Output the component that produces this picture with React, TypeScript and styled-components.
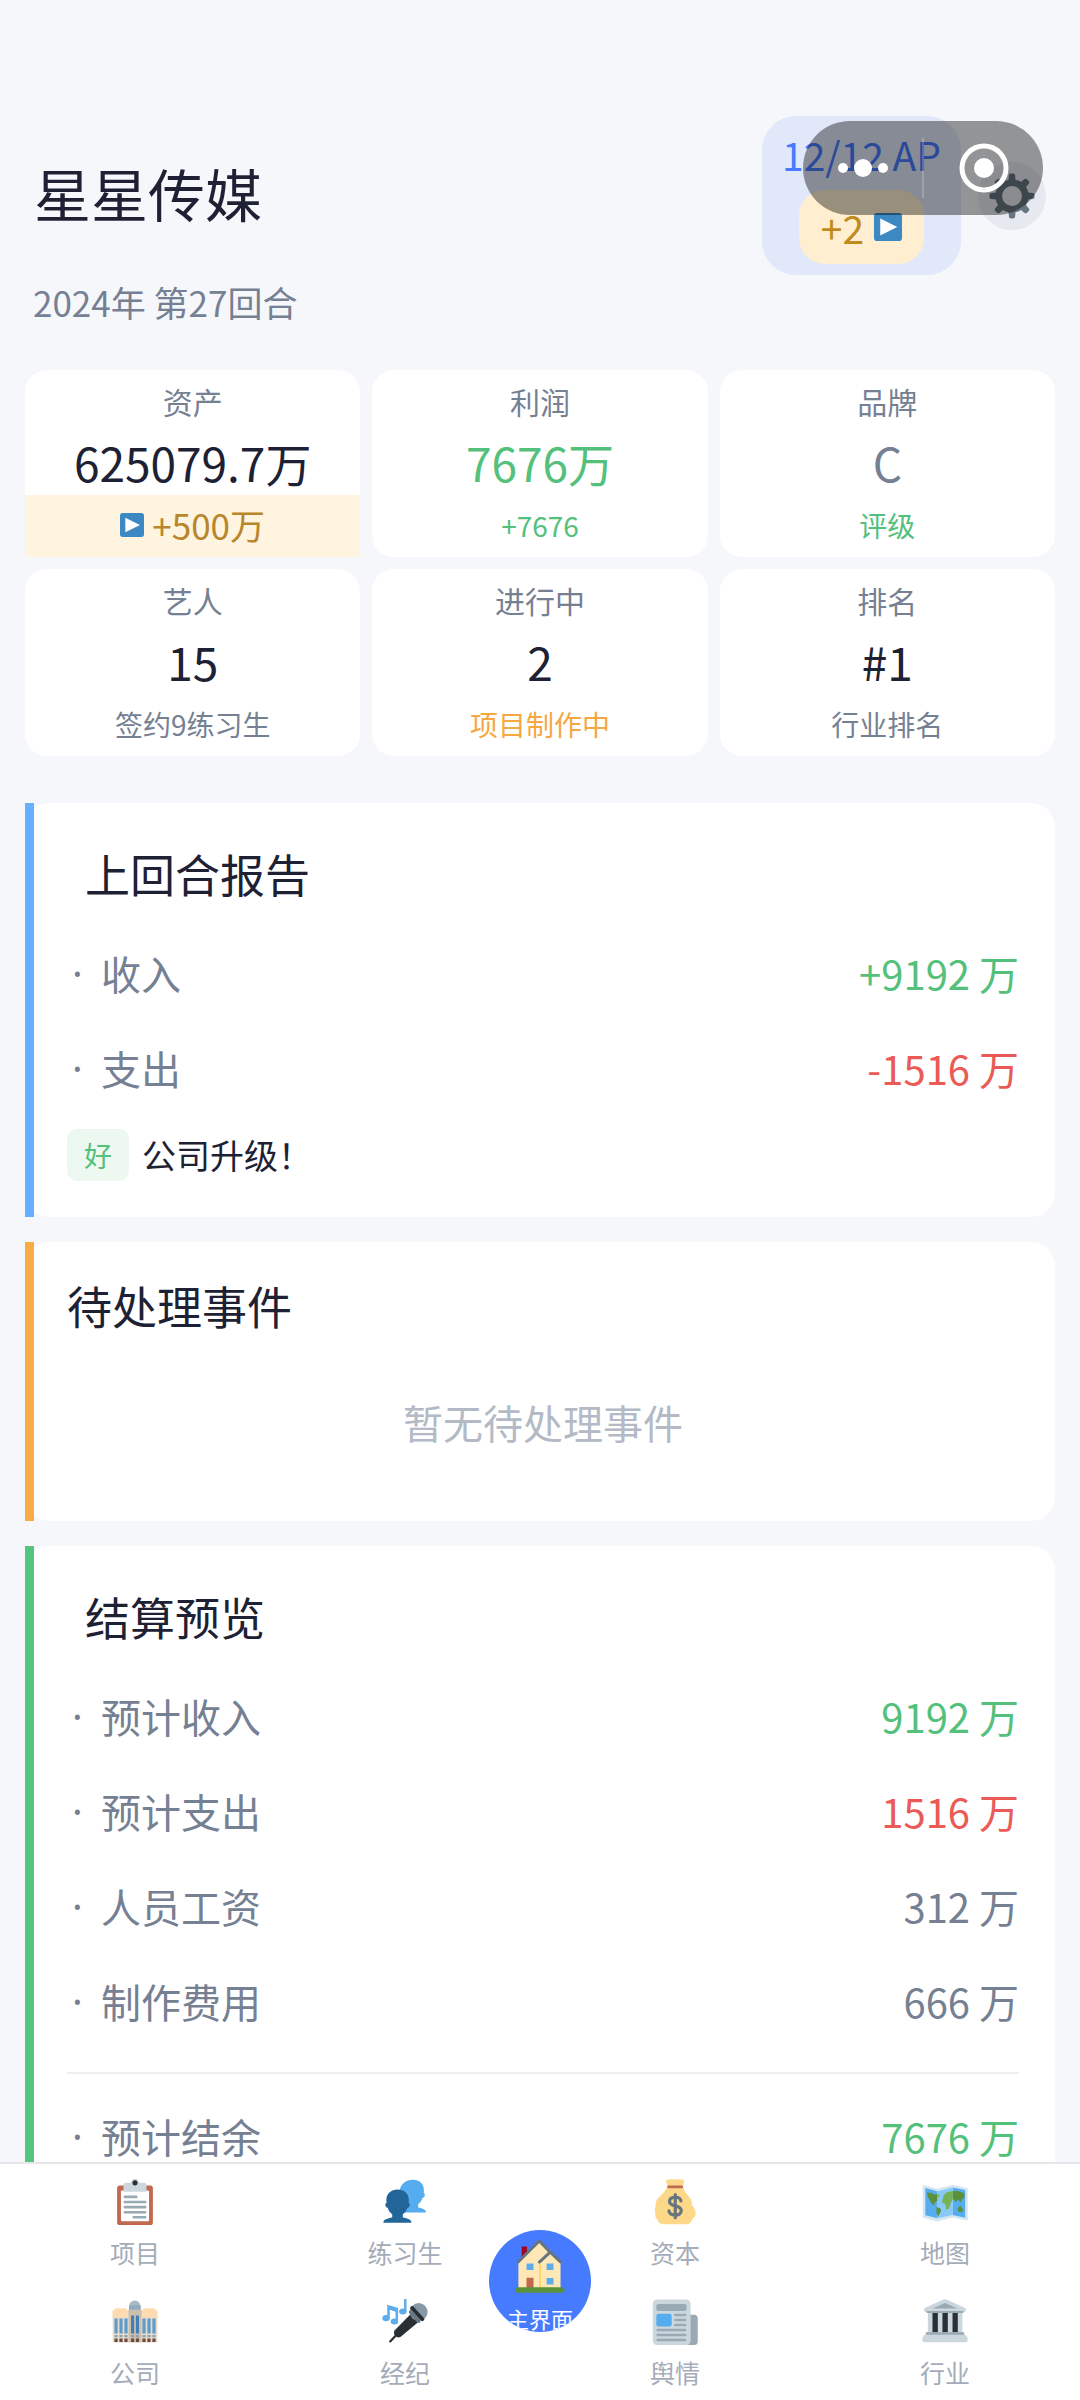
import React from "react";
import styled, { createGlobalStyle } from "styled-components";

const color = {
  page: "#f5f7fb",
  card: "#ffffff",
  ink: "#1d2133",
  muted: "#768093",
  faint: "#a4acba",
  green: "#53c07b",
  red: "#ea5a57",
  orange: "#f5a742",
  blue: "#477bff",
  gold: "#b8862b",
};

const GlobalStyle = createGlobalStyle`
  *, *::before, *::after { box-sizing: border-box; }
  body {
    margin: 0;
    background: ${color.page};
    color: ${color.ink};
    font-family: "Noto Sans CJK SC", "Noto Sans", sans-serif;
  }
  h1, h2, p, dl, dd, dt { margin: 0; font-weight: 400; }
  button { border: 0; padding: 0; font: inherit; cursor: pointer; }
`;

const Shell = styled.div`
  height: 100vh;
  display: flex;
  flex-direction: column;
  position: relative;
`;

const Scroll = styled.main`
  flex: 1;
  min-height: 0;
  overflow-y: auto;
  scrollbar-width: none;
  padding: 116px 25px 40px;
`;

const Header = styled.header`
  display: flex;
  align-items: center;
  gap: 17px;
  padding: 0 9px;
`;

const Company = styled.h1`
  flex: 1;
  padding-bottom: 8px;
  font-size: 57px;
  line-height: 80px;
`;

const ActionPoints = styled.div`
  display: flex;
  flex-direction: column;
  align-items: center;
  gap: 11px;
  padding: 13px 20px 11px;
  border-radius: 34px;
  background: #e1e8fa;
  color: ${color.blue};
  font-size: 39px;
  line-height: 50px;
`;

const Bonus = styled.button`
  display: flex;
  align-items: center;
  gap: 10px;
  height: 74px;
  padding: 0 22px;
  border-radius: 26px;
  background: #ffefd0;
  color: #c18a1f;
`;

const GearButton = styled.button`
  display: grid;
  place-items: center;
  width: 68px;
  height: 68px;
  border-radius: 50%;
  background: #e6e9f0;
`;

const Turn = styled.p`
  margin: 3px 0 44px;
  padding: 0 8px;
  color: ${color.muted};
  font-size: 35px;
  line-height: 48px;
`;

const Capsule = styled.div`
  position: absolute;
  top: 121px;
  right: 37px;
  display: flex;
  align-items: center;
  width: 240px;
  height: 94px;
  border-radius: 47px;
  background: rgba(0, 0, 0, 0.4);
`;

const CapsuleButton = styled.button`
  flex: 1;
  display: grid;
  place-items: center;
  height: 100%;
  background: none;
`;

const CapsuleRule = styled.span`
  width: 2px;
  height: 60px;
  background: rgba(255, 255, 255, 0.2);
`;

const Stats = styled.section`
  display: grid;
  grid-template-columns: repeat(3, 1fr);
  gap: 12px;
  margin-bottom: 47px;
`;

const Stat = styled.div`
  padding-top: 10px;
  border-radius: 22px;
  background: ${color.card};
  text-align: center;
`;

const StatLabel = styled.p`
  margin-bottom: 11px;
  color: ${color.muted};
  font-size: 30px;
  line-height: 42px;
`;

const StatValue = styled.p<{ $tone?: string }>`
  padding-bottom: 4px;
  color: ${(p) => p.$tone || color.ink};
  font-size: 46px;
  line-height: 58px;
`;

const StatNote = styled.p<{ $tone?: string }>`
  padding-bottom: 2px;
  color: ${(p) => p.$tone || color.muted};
  font-size: 28px;
  line-height: 60px;
`;

const AdBonus = styled.button`
  display: flex;
  align-items: center;
  justify-content: center;
  gap: 8px;
  width: 100%;
  height: 62px;
  padding-bottom: 3px;
  background: #fff4df;
  color: ${color.gold};
  font-size: 35px;
`;

const Card = styled.section<{ $accent: string }>`
  position: relative;
  margin-bottom: 25px;
  padding: 34px 36px 36px 42px;
  border-radius: 24px;
  background: ${color.card};

  &::before {
    content: "";
    position: absolute;
    inset: 0 auto 0 0;
    width: 9px;
    background: ${(p) => p.$accent};
  }
`;

const CardTitle = styled.h2<{ $indented?: boolean }>`
  margin-bottom: ${(p) => (p.$indented ? 14 : 0)}px;
  padding-left: ${(p) => (p.$indented ? 18 : 0)}px;
  font-size: 45px;
  line-height: ${(p) => (p.$indented ? 74 : 60)}px;
`;

const Row = styled.div`
  display: flex;
  align-items: center;
  height: 95px;
  color: ${color.muted};
  font-size: 40px;
  line-height: 44px;
`;

const Bullet = styled.span`
  width: 34px;
  padding-left: 5px;
  font-family: "Noto Sans", sans-serif;
`;

const RowLabel = styled.dt`
  flex: 1;
`;

const RowValue = styled.dd<{ $tone?: string }>`
  color: ${(p) => p.$tone || color.muted};
`;

const Rule = styled.hr`
  margin: 24px 0 14px;
  border: 0;
  border-top: 2px solid #edeff3;
`;

const News = styled.p`
  display: flex;
  align-items: center;
  gap: 13px;
  margin-top: 14px;
  font-size: 34px;
  line-height: 52px;
`;

const Tag = styled.span`
  padding: 0 17px;
  border-radius: 10px;
  background: #edf8f1;
  color: ${color.green};
  font-size: 28px;
`;

const Empty = styled.p`
  padding: 58px 0 35px;
  color: #b3bac6;
  font-size: 40px;
  line-height: 56px;
  text-align: center;
`;

const Nav = styled.nav`
  position: relative;
  display: grid;
  grid-template-columns: repeat(4, 1fr);
  row-gap: 30px;
  padding: 15px 0 11px;
  border-top: 2px solid #e4e6ea;
  background: ${color.card};
`;

const NavItem = styled.button`
  display: flex;
  flex-direction: column;
  align-items: center;
  gap: 10px;
  background: none;
  color: ${color.faint};
  font-size: 25px;
  line-height: 34px;
`;

const HomeButton = styled.button`
  position: absolute;
  top: 66px;
  left: 50%;
  display: flex;
  flex-direction: column;
  align-items: center;
  gap: 13px;
  width: 102px;
  height: 102px;
  padding-top: 9px;
  margin-left: -51px;
  overflow: hidden;
  border-radius: 50%;
  background: ${color.blue};
  color: #ffffff;
  font-size: 22px;
  line-height: 24px;

  svg { flex: none; }
`;

type IconProps = { size?: number; children?: React.ReactNode };

const Icon = ({ size = 46, children }: IconProps) => (
  <svg width={size} height={size} viewBox="0 0 36 36" aria-hidden="true">
    {children}
  </svg>
);

const PlayIcon = ({ size }: IconProps) => (
  <Icon size={size}>
    <rect width="36" height="36" rx="4" fill="#3b88c3" />
    <path d="M8 7l22 11L8 29z" fill="#fff" />
  </Icon>
);

const GearIcon = () => (
  <Icon>
    <g fill="#66757f">
      {[0, 45, 90, 135, 180, 225, 270, 315].map((a) => (
        <path key={a} transform={`rotate(${a} 18 18)`} d="M15 8l.6-6.3Q15.8.4 17 .4h2q1.200 0 1.400 1.300L21 8z" />
      ))}
    </g>
    <circle cx="18" cy="18" r="10.400" fill="none" stroke="#66757f" strokeWidth="5.200" />
  </Icon>
);

const ClipboardIcon = () => (
  <Icon>
    <rect x="4" y="5" width="28" height="31" rx="2" fill="#c1694f" />
    <rect x="7" y="9" width="22" height="24" rx="1" fill="#fff" />
    <path fill="#ccd6dd" d="M25 3h-4a3 3 0 1 0-6 0h-4a2 2 0 0 0-2 2v5h18V5a2 2 0 0 0-2-2z" />
    <circle cx="18" cy="3" r="2" fill="#292f33" />
    <path stroke="#99aab5" strokeWidth="2" strokeLinecap="round" d="M10 14h9M10 18h16M10 22h16M10 26h16M17 30h9" />
  </Icon>
);

const PeopleIcon = () => (
  <Icon>
    <path
      fill="#55acee"
      d="M24.300.6c5.200 0 8.500 3.600 8.500 8.200 0 .8 0 1.400-.2 2 .8.3 1 1.200.8 2.200-.2 1.100-.9 1.900-1.600 1.700-.7 2.300-2 4-3.500 5.100v2.500c3.500.7 6.300 1.700 6.300 4H14V8.800C14.600 4 18.600.6 24.300.6z"
    />
    <path
      fill="#269"
      d="M12.300 8.300c5.400 0 8.700 3.500 8.700 8.200 0 .8 0 1.500-.2 2.100.8.3 1.100 1.200.9 2.200-.2 1.100-1 1.800-1.700 1.600-.7 2.300-2 4.100-3.700 5.200v2.600c3.800.7 6.700 1.400 6.700 4H1.100c0-2.600 3-3.300 6.900-4v-2.600c-1.700-1.100-3-2.900-3.600-5.200-.8.2-1.500-.5-1.700-1.600-.2-1 .1-1.900.9-2.200-.1-.6-.2-1.300-.2-2.100 0-4.700 3.500-8.200 8.900-8.200z"
    />
  </Icon>
);

const MoneyIcon = () => (
  <Icon>
    <path
      fill="#fdd888"
      d="M11 2.200c-.3-1.500 1-2.200 2.200-1.500 1-.9 2.300-.9 3.200-.2 1.100-.6 2.400-.6 3.300 0 1-.7 2.100-.6 3 .2 1.400-.7 2.700 0 2.400 1.500-.2 1.200-.7 2-.9 3.300.8 5 4.500 7.300 6.300 10.600 1 1.900.8 3 .6 4 1.400 1.700 3 4 3.100 7-.1 2.200-1.600 3.300-2.400 4-.7 2.700-2.300 4.400-5 4.400H9.500c-2.700 0-5-1.700-5.300-4-1.200-1-1.900-2.300-1.600-4.600C1.700 25.500 2.300 22 3 20.500c-.4-1.600.1-3 1-4.500 2-3 6.700-5.500 8-10.500-.1-1.400-.8-2.100-1-3.300z"
    />
    <rect x="12" y="5" width="12.300" height="2.200" rx="1" fill="#bf6952" />
    <path
      fill="none"
      stroke="#67757f"
      strokeWidth="2.500"
      strokeLinecap="round"
      d="M18.200 12.300v18M22.600 17.200c-.2-1.900-2-2.900-4.400-2.900-2.500 0-4.500 1.100-4.500 3.300 0 4.700 9.200 2.200 9.200 7.100 0 2.300-2 3.600-4.700 3.600-2.900 0-4.700-1.300-4.900-3.300"
    />
  </Icon>
);

const MapIcon = () => (
  <Icon>
    <path fill="#d5e6f2" d="M1.700 4.800L12 7.600l12-3 10.800 2.200q1 .2 1 1.200v23.600q0 1-1 .8L24 30.200l-12 3L1.500 30.400q-1-.2-1-1.200V5.600q0-1 1.200-.8z" />
    <path fill="#55acee" d="M2.600 7l9.400 2.500v21.300l-9.400-2.500zM24 6.700l9.800 2v21.600l-9.800-2.200z" />
    <path fill="#88c9f9" d="M12 9.500l12-2.800v21.400l-12 2.700z" />
    <path fill="#5c913b" d="M3.800 10.600l4 .4 1.800 1.200L12 12v5l-2 1.600-.6 2.400L7 18.500 4.700 14zM11.200 22l3 .8.800 2.200-1.600 2.800-.6 2-1.300-2.800z" />
    <path fill="#5c913b" d="M24 9.600l3.400-.4 3.200 1 2.700 1.200-.3 3.400-2 1.500-.3 2.500-2.200-2.600L26.300 18 24 15zM28 22.500l2-1.500 2 2.600-.3 2.500-3.500-.7z" />
    <path fill="#77b255" d="M12.300 12l1.700.8-1.700 2.500zM17 12.500l2.500-2.200 4.500-1v6.800l-1.500 2.500-1.300 4.400-2.300 1-.6-4.500-2.600-1 .5-3z" />
  </Icon>
);

const TowerIcon = () => (
  <Icon>
    <circle cx="17.800" cy="5.400" r="4.300" fill="#aab8c2" />
    <rect x="13.300" y="5" width="9.200" height="5" fill="#8fa9bd" />
    <path fill="#e9dccb" d="M.5 9.300h12.300V34H.5zM23.200 9.300h12.300V34H23.200z" />
    <path fill="#ffdcb0" d="M.5 9.300L3 7.300h8l1.800 2v5H.5zM35.500 9.300L33 7.300h-8l-1.800 2v5h12.300z" />
    <rect x="12.800" y="8.300" width="10.400" height="25.700" fill="#cdbfae" />
    <path fill="#5d9ccb" d="M1.900 15.200h2.500V27H1.900zM5.800 15.200h2.500V27H5.800zM9.700 15.200h2.500V27H9.700zM23.800 15.200h2.500V27h-2.500zM27.700 15.200h2.500V27h-2.500zM31.600 15.200h2.500V27h-2.500z" />
    <path fill="#3f7fb5" d="M14.900 13h2.400v14h-2.400zM18.700 13h2.400v14h-2.400z" />
    <path fill="#8ba3b3" d="M1.900 28.200h2.500V30H1.900zM5.800 28.200h2.500V30H5.800zM9.700 28.200h2.500V30H9.700zM14.900 28.200h2.400V30h-2.400zM18.700 28.200h2.400V30h-2.400zM23.800 28.200h2.500V30h-2.500zM27.700 28.200h2.500V30h-2.500zM31.600 28.200h2.500V30h-2.500z" />
    <path fill="#6b4a3c" d="M1.900 31h2.500v2.700H1.900zM5.800 31h2.500v2.700H5.800zM9.700 31h2.500v2.700H9.700zM14.900 31h2.400v2.700h-2.400zM18.700 31h2.400v2.700h-2.400zM23.800 31h2.500v2.700h-2.500zM27.700 31h2.500v2.700h-2.500zM31.600 31h2.500v2.700h-2.500z" />
  </Icon>
);

const MicIcon = () => (
  <Icon>
    <g fill="#5dadec">
      <ellipse cx="3.200" cy="15" rx="2.900" ry="2.400" />
      <ellipse cx="9.700" cy="17.600" rx="2.900" ry="2.400" />
      <ellipse cx="16.300" cy="9.800" rx="2.900" ry="2.400" />
      <path d="M4.100 4.500l8.500 2.600v10.500h-2V10L6.100 8.500V15h-2zM17.300 0l1.900-.3V9.800h-1.900z" />
    </g>
    <path fill="#292f33" d="M22.500 11.800l5.500 6.500-13.300 11.200q-2.400 1.300-4.300-.5-1.700-2-.6-4.300z" />
    <path stroke="#292f33" strokeWidth="1.700" strokeLinecap="round" d="M11 28.300l-4.600 5" />
    <circle cx="28.700" cy="10.200" r="7" fill="#8899a6" />
    <path stroke="#292f33" strokeWidth="3" strokeLinecap="round" d="M23.600 7l8 8.800" />
    <path stroke="#66757f" strokeWidth="2.600" strokeLinecap="round" d="M22.300 10.200l6.500 7.200" />
  </Icon>
);

const NewsIcon = () => (
  <Icon>
    <path fill="#99aab5" d="M28 12.300h5q2.800 0 2.800 3V33q0 3-3 3H27z" />
    <rect x=".6" y=".3" width="29.600" height="35.700" rx="3.500" fill="#ccd6dd" />
    <rect x="3.400" y="3.900" width="23.600" height="5.500" rx="1.500" fill="#99aab5" />
    <rect x="3.400" y="11.500" width="12" height="10" rx="1.800" fill="#55acee" />
    <path stroke="#99aab5" strokeWidth="1.900" strokeLinecap="round" d="M18.200 12.500H26M18.200 16.400H26M18.200 20.400H26M4.400 24.300H26M4.400 28.200H26M4.400 32.100H26" />
  </Icon>
);

const BankIcon = () => (
  <Icon>
    <rect x="4.600" y="9" width="27" height="18" fill="#ccd6dd" />
    <path fill="#292f33" d="M8.200 10.500h4.200V26H8.200zM16 10.500h4.200V26H16zM23.900 10.500H28V26h-4.100z" />
    <path fill="#ccd6dd" d="M16.800.4q1.200-.6 2.400 0L33.500 6.800q1 .5.900 2-.1 1.400-1.200 1.400H2.800q-1.100 0-1.200-1.400-.1-1.500.9-2z" />
    <path fill="#99aab5" d="M18 3.200l9.800 4.300H8.200zM3.600 9.300h28.800v1.600H3.600zM3 26h30v2.500H3z" />
    <path fill="#ccd6dd" d="M2.400 28h31.200q2.200 1 2.200 3.800 0 2-1.600 2H1.800q-1.600 0-1.600-2Q.2 29 2.400 28z" />
  </Icon>
);

const HouseIcon = () => (
  <Icon size={54}>
    <rect x="5.800" y="5" width="3.500" height="9" fill="#a0041e" />
    <path fill="#ffe8b6" d="M3.600 15L17.500 1.500 25 9l6.700 7v17H3.600z" />
    <path fill="#ffcc4d" d="M17.600 17h.9v15.500h-.9z" />
    <path fill="none" stroke="#66757f" strokeWidth="2" strokeLinecap="round" strokeLinejoin="round" d="M3.600 15.200L17.500 1.300l7.300 7.500 6.900 6.400M24.800 8.800l-7.200 6.600" />
    <path fill="#5dadec" d="M9 16.300h4.700v4.400H9zM22.400 16.300H27v4.400h-4.600zM22.400 26H27v4.400h-4.600z" />
    <path fill="#c1694f" d="M9 25.800h4.700V33H9z" />
    <rect x="1.500" y="32.200" width="32.800" height="3.600" rx="1.600" fill="#5c913b" />
  </Icon>
);

const stats = [
  { label: "利润", value: "7676万", tone: color.green, note: "+7676", noteTone: color.green },
  { label: "品牌", value: "C", tone: color.muted, note: "评级", noteTone: color.green },
  { label: "艺人", value: "15", note: "签约9练习生" },
  { label: "进行中", value: "2", note: "项目制作中", noteTone: color.orange },
  { label: "排名", value: "#1", note: "行业排名" },
];

const preview = [
  { label: "预计收入", value: "9192 万", tone: color.green },
  { label: "预计支出", value: "1516 万", tone: color.red },
  { label: "人员工资", value: "312 万" },
  { label: "制作费用", value: "666 万" },
];

const navItems = [
  { label: "项目", Glyph: ClipboardIcon },
  { label: "练习生", Glyph: PeopleIcon },
  { label: "资本", Glyph: MoneyIcon },
  { label: "地图", Glyph: MapIcon },
  { label: "公司", Glyph: TowerIcon },
  { label: "经纪", Glyph: MicIcon },
  { label: "舆情", Glyph: NewsIcon },
  { label: "行业", Glyph: BankIcon },
];

const Line = ({ label, value, tone }: { label: string; value: string; tone?: string }) => (
  <Row>
    <Bullet aria-hidden="true">·</Bullet>
    <RowLabel>{label}</RowLabel>
    <RowValue $tone={tone}>{value}</RowValue>
  </Row>
);

export default function App() {
  return (
    <Shell>
      <GlobalStyle />
      <Scroll>
        <Header>
          <Company>星星传媒</Company>
          <ActionPoints>
            <span>12/12 AP</span>
            <Bonus type="button">
              +2
              <PlayIcon size={28} />
            </Bonus>
          </ActionPoints>
          <GearButton type="button" aria-label="设置">
            <GearIcon />
          </GearButton>
        </Header>
        <Turn>2024年 第27回合</Turn>

        <Stats>
          <Stat>
            <StatLabel>资产</StatLabel>
            <StatValue>625079.7万</StatValue>
            <AdBonus type="button">
              <PlayIcon size={24} />
              +500万
            </AdBonus>
          </Stat>
          {stats.map((s) => (
            <Stat key={s.label}>
              <StatLabel>{s.label}</StatLabel>
              <StatValue $tone={s.tone}>{s.value}</StatValue>
              <StatNote $tone={s.noteTone}>{s.note}</StatNote>
            </Stat>
          ))}
        </Stats>

        <Card $accent="#66b1ff">
          <CardTitle $indented>上回合报告</CardTitle>
          <dl>
            <Line label="收入" value="+9192 万" tone={color.green} />
            <Line label="支出" value="-1516 万" tone={color.red} />
          </dl>
          <News>
            <Tag>好</Tag>
            公司升级！
          </News>
        </Card>

        <Card $accent="#f9ab45">
          <CardTitle>待处理事件</CardTitle>
          <Empty>暂无待处理事件</Empty>
        </Card>

        <Card $accent="#55c47d">
          <CardTitle $indented>结算预览</CardTitle>
          <dl>
            {preview.map((r) => (
              <Line key={r.label} {...r} />
            ))}
          </dl>
          <Rule />
          <dl>
            <Line label="预计结余" value="7676 万" tone={color.green} />
          </dl>
        </Card>
      </Scroll>

      <Nav>
        {navItems.map(({ label, Glyph }) => (
          <NavItem key={label} type="button">
            <Glyph />
            {label}
          </NavItem>
        ))}
        <HomeButton type="button">
          <HouseIcon />
          主界面
        </HomeButton>
      </Nav>

      <Capsule>
        <CapsuleButton type="button" aria-label="更多">
          <svg width="52" height="20" viewBox="0 0 52 20" fill="#fff" aria-hidden="true">
            <circle cx="6" cy="10" r="5" />
            <circle cx="26" cy="10" r="9" />
            <circle cx="46" cy="10" r="5" />
          </svg>
        </CapsuleButton>
        <CapsuleRule />
        <CapsuleButton type="button" aria-label="关闭">
          <svg width="50" height="50" viewBox="0 0 50 50" aria-hidden="true">
            <circle cx="25" cy="25" r="22" fill="none" stroke="#fff" strokeWidth="5" />
            <circle cx="25" cy="25" r="10" fill="#fff" />
          </svg>
        </CapsuleButton>
      </Capsule>
    </Shell>
  );
}
